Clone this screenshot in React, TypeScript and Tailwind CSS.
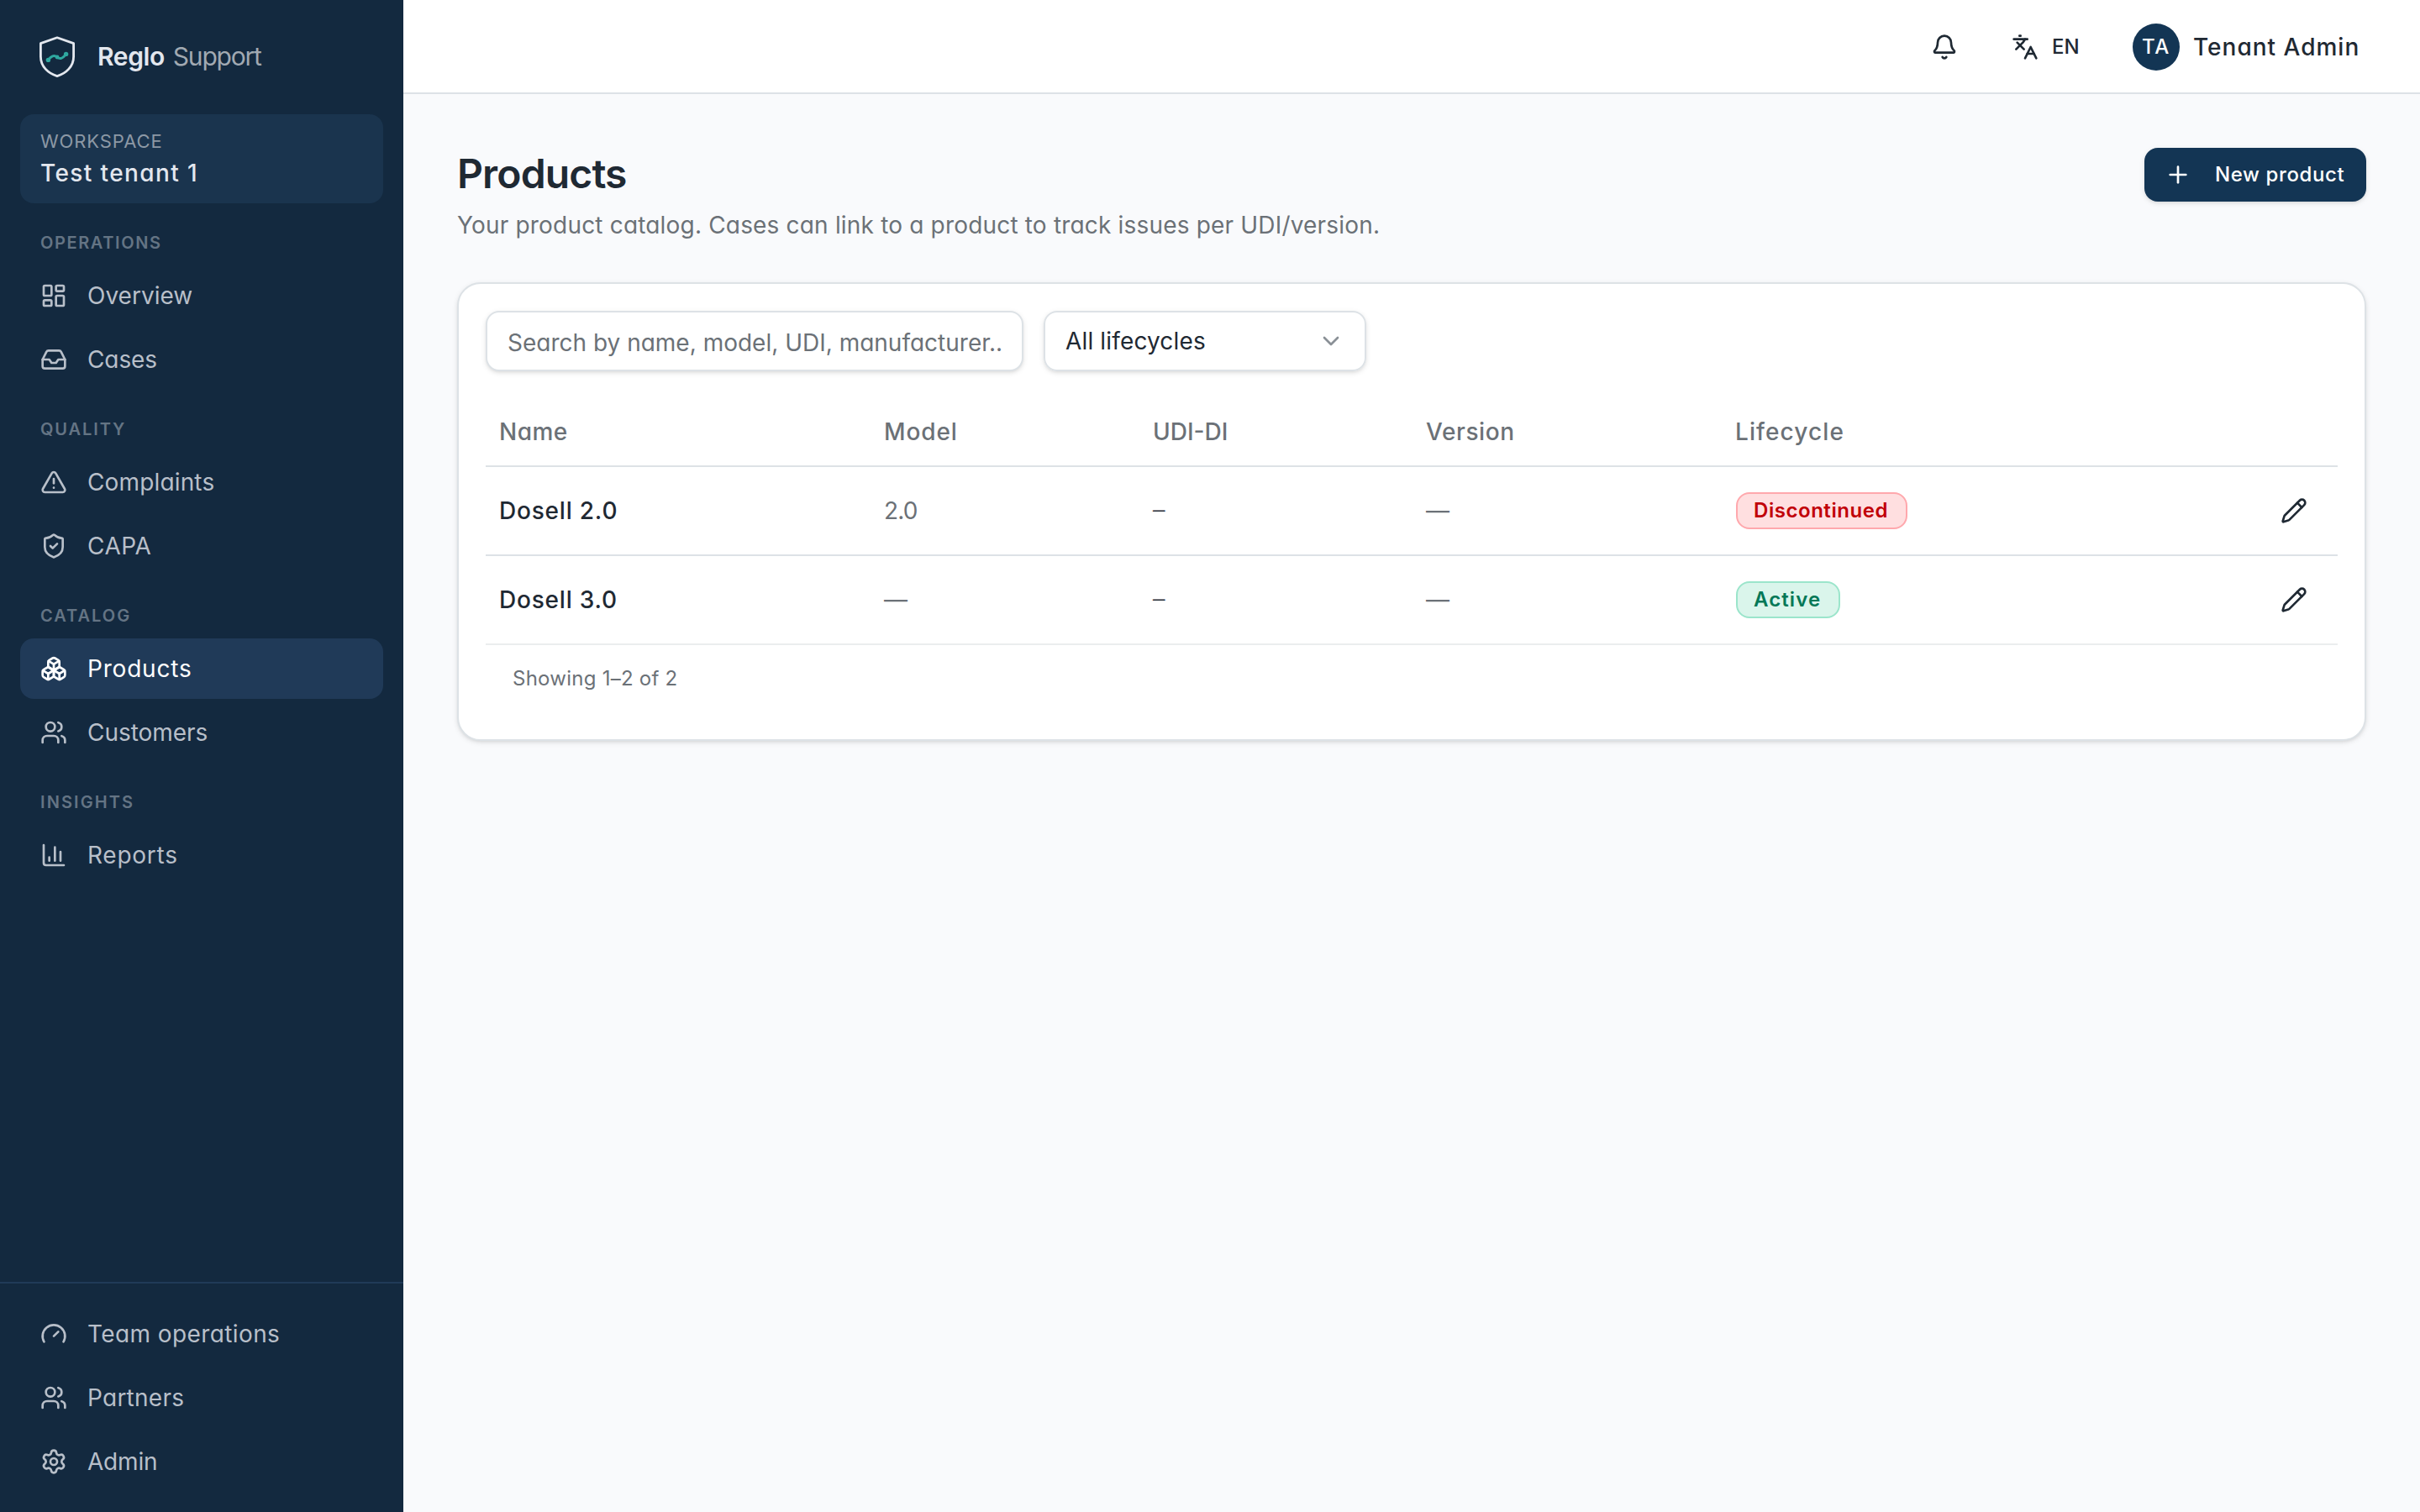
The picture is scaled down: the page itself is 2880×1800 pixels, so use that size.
import React from "react";
import {
  Bell,
  Boxes,
  ChartColumn,
  ChevronDown,
  Gauge,
  Inbox,
  Languages,
  LayoutDashboard,
  Pencil,
  Plus,
  Settings,
  ShieldCheck,
  TriangleAlert,
  Users,
  type LucideIcon,
} from "lucide-react";

type Item = { label: string; icon: LucideIcon; tracking?: string; active?: boolean };

const sections: { title: string; tracking: string; items: Item[] }[] = [
  {
    title: "Operations",
    tracking: "tracking-[1.6px]",
    items: [
      { label: "Overview", icon: LayoutDashboard },
      { label: "Cases", icon: Inbox, tracking: "tracking-[-0.1px]" },
    ],
  },
  {
    title: "Quality",
    tracking: "tracking-[1.9px]",
    items: [
      { label: "Complaints", icon: TriangleAlert, tracking: "tracking-[0.15px]" },
      { label: "CAPA", icon: ShieldCheck, tracking: "tracking-[0.5px]" },
    ],
  },
  {
    title: "Catalog",
    tracking: "tracking-[2px]",
    items: [
      { label: "Products", icon: Boxes, tracking: "tracking-[0.8px]", active: true },
      { label: "Customers", icon: Users, tracking: "tracking-[-0.05px]" },
    ],
  },
  {
    title: "Insights",
    tracking: "tracking-[2.1px]",
    items: [{ label: "Reports", icon: ChartColumn, tracking: "tracking-[0.75px]" }],
  },
];

const footerItems: Item[] = [
  { label: "Team operations", icon: Gauge, tracking: "tracking-[0.4px]" },
  { label: "Partners", icon: Users, tracking: "tracking-[0.25px]" },
  { label: "Admin", icon: Settings, tracking: "tracking-[-0.2px]" },
];

function Logo() {
  return (
    <svg viewBox="0 0 28 28" className="size-14" fill="none" strokeLinecap="round" strokeLinejoin="round">
      <path
        d="M14 2.4 L23.8 5.8 V13.6 C23.8 19.6 19.4 23.6 14 25.3 C8.6 23.6 4.2 19.6 4.2 13.6 V5.8 Z"
        stroke="#e3e7ee"
        strokeWidth="1.4"
      />
      <path d="M8.7 15.7 C10.4 13.4 12.2 12.6 13.8 13.9 S16.8 15.4 19.2 12.3" stroke="#2fa8a0" strokeWidth="1.5" />
      <circle cx="8.7" cy="15.7" r="1.35" fill="#2fa8a0" />
      <circle cx="14" cy="14" r="1.2" fill="#2fa8a0" />
      <circle cx="19.3" cy="12.2" r="1.35" fill="#2fa8a0" />
    </svg>
  );
}

function NavItem({ item }: { item: Item }) {
  const Icon = item.icon;
  return (
    <a
      className={
        item.active
          ? "flex h-18 items-center gap-6 rounded-2xl bg-[#203a58] px-6 text-[28px] text-white"
          : "flex h-18 items-center gap-6 rounded-2xl px-6 text-[28px] text-[#b8bfc9]"
      }
    >
      <Icon className="size-8 shrink-0" />
      <span className={item.tracking}>{item.label}</span>
    </a>
  );
}

function Sidebar() {
  return (
    <aside className="flex w-[480px] shrink-0 flex-col bg-[#13293f]">
      <div className="flex h-[136px] items-center gap-5 px-10">
        <Logo />
        <div className="flex gap-2.5 pb-0.5 text-[30px] leading-[48px]">
          <span className="font-semibold tracking-[-0.4px] text-[#e3e7ee]">Reglo</span>
          <span className="tracking-[-1.2px] text-[#a1a9b2]">Support</span>
        </div>
      </div>
      <div className="mx-6 flex h-[106px] flex-col rounded-2xl bg-[#1a344e] px-6 pt-4">
        <div className="text-[22px] leading-8 tracking-[0.9px] text-[#8c98a5] uppercase">Workspace</div>
        <div className="mt-0.5 text-[28px] leading-10 font-medium tracking-[1.4px] text-[#e3e7ee]">Test tenant 1</div>
      </div>
      <nav className="flex flex-col px-6">
        {sections.map((s) => (
          <div key={s.title} className="flex flex-col">
            <div
              className={`flex h-[74px] items-end px-6 pb-3 text-[20px] leading-[30px] font-semibold text-[#647484] uppercase ${s.tracking}`}
            >
              {s.title}
            </div>
            <div className="flex flex-col gap-1">
              {s.items.map((i) => (
                <NavItem key={i.label} item={i} />
              ))}
            </div>
          </div>
        ))}
      </nav>
      <div className="mt-auto flex flex-col gap-1 border-t-2 border-[#203a58] p-6">
        {footerItems.map((i) => (
          <NavItem key={i.label} item={i} />
        ))}
      </div>
    </aside>
  );
}

function Header() {
  return (
    <header className="flex h-28 shrink-0 items-center justify-end border-b-2 border-[#dde2e6] bg-white pt-0.5 pr-[72px]">
      <Bell className="mr-16 size-8" />
      <div className="mr-16 flex items-center gap-4">
        <Languages className="size-8" />
        <span className="w-8 text-[24px] font-medium">EN</span>
      </div>
      <div className="flex items-center gap-4">
        <span className="flex size-14 items-center justify-center rounded-full bg-[#133554] text-[24px] font-medium tracking-[1.6px] text-white">
          TA
        </span>
        <span className="w-[198px] text-[28px] font-medium tracking-[1px] whitespace-nowrap">Tenant Admin</span>
      </div>
    </header>
  );
}

type Lifecycle = "Discontinued" | "Active";

function Badge({ kind }: { kind: Lifecycle }) {
  return (
    <span
      className={
        kind === "Active"
          ? "flex h-11 w-[124px] items-center rounded-2xl border-2 border-[#9be5cb] bg-[#daf5eb] px-[19px] text-[24px] font-semibold tracking-[1.1px] text-[#047857]"
          : "flex h-11 w-[204px] items-center rounded-2xl border-2 border-[#ffa8ad] bg-[#ffdfe0] px-[19px] text-[24px] font-semibold tracking-[0.55px] text-[#c10007]"
      }
    >
      {kind}
    </span>
  );
}

const rows: { name: string; model: string; lifecycle: Lifecycle }[] = [
  { name: "Dosell 2.0", model: "2.0", lifecycle: "Discontinued" },
  { name: "Dosell 3.0", model: "—", lifecycle: "Active" },
];

const columns = "grid grid-cols-[458px_320px_325px_368px_1fr_auto] items-center";

function Table() {
  return (
    <div className="mt-8 text-[28px]">
      <div className={`${columns} h-[82px] border-b-2 border-[#dde2e6] font-medium text-[#6b7177]`}>
        <div className="px-4 tracking-[0.5px]">Name</div>
        <div className="px-4 tracking-[0.9px]">Model</div>
        <div className="px-4">UDI-DI</div>
        <div className="px-4 tracking-[0.6px]">Version</div>
        <div className="px-4 tracking-[1.1px]">Lifecycle</div>
      </div>
      {rows.map((r, i) => (
        <div
          key={r.name}
          className={
            i === rows.length - 1
              ? `${columns} h-[104px] text-[#6b7177]`
              : `${columns} h-[106px] border-b-2 border-[#dde2e6] text-[#6b7177]`
          }
        >
          <div className="px-4 font-medium tracking-[0.8px] text-[#1f2933]">{r.name}</div>
          <div className="px-4 tracking-[-0.8px]">{r.model}</div>
          <div className="px-4 font-['Liberation_Mono',monospace] text-[24px] text-[#1f2933]">—</div>
          <div className="px-4">—</div>
          <div className="flex pr-4 pl-[17px]">
            <Badge kind={r.lifecycle} />
          </div>
          <div className="pr-9">
            <Pencil className="size-8 text-[#1f2933]" />
          </div>
        </div>
      ))}
      <div className="border-t-2 border-[#ebedee] px-8 pt-5 text-[24px] leading-10 tracking-[0.25px] text-[#6b7177]">
        Showing 1–2 of 2
      </div>
    </div>
  );
}

export default function App() {
  return (
    <div className="flex h-[1800px] w-[2880px] overflow-hidden bg-[#f9fafc] font-['Inter',sans-serif] text-[#1f2933] [font-feature-settings:'cv11']">
      <Sidebar />
      <div className="flex min-w-0 flex-1 flex-col">
        <Header />
        <main className="flex flex-col px-16 pt-16">
          <div className="flex items-start justify-between">
            <div>
              <h1 className="text-[48px] leading-[62px] font-semibold tracking-[-0.85px]">Products</h1>
              <p className="mt-2.5 text-[28px] leading-10 tracking-[0.18px] text-[#6b7177]">
                Your product catalog. Cases can link to a product to track issues per UDI/version.
              </p>
            </div>
            <button className="flex h-16 w-[264px] items-center rounded-2xl bg-[#133554] pl-6 text-[24px] font-medium tracking-[0.6px] whitespace-nowrap text-white shadow-[0_2px_6px_rgba(0,0,0,0.1),0_2px_4px_-2px_rgba(0,0,0,0.1)]">
              <Plus className="mr-7 size-8" />
              New product
            </button>
          </div>
          <section className="mt-12 h-[546px] rounded-[28px] border-2 border-[#dde2e6] bg-white p-8 shadow-[0_2px_6px_rgba(0,0,0,0.1),0_2px_4px_-2px_rgba(0,0,0,0.1)]">
            <div className="flex gap-6">
              <input
                className="h-18 w-[640px] rounded-2xl border-2 border-[#dde2e6] bg-white px-6 pt-1 text-[28px] shadow-[0_2px_6px_rgba(0,0,0,0.1),0_2px_4px_-2px_rgba(0,0,0,0.1)] placeholder:text-[#6b7177]"
                placeholder="Search by name, model, UDI, manufacturer.."
              />
              <div className="flex h-18 w-96 items-center justify-between rounded-2xl border-2 border-[#dde2e6] px-6 text-[28px] tracking-[0.15px] shadow-[0_2px_6px_rgba(0,0,0,0.1),0_2px_4px_-2px_rgba(0,0,0,0.1)]">
                All lifecycles
                <ChevronDown className="size-8 text-[#8a9096]" />
              </div>
            </div>
            <Table />
          </section>
        </main>
      </div>
    </div>
  );
}
